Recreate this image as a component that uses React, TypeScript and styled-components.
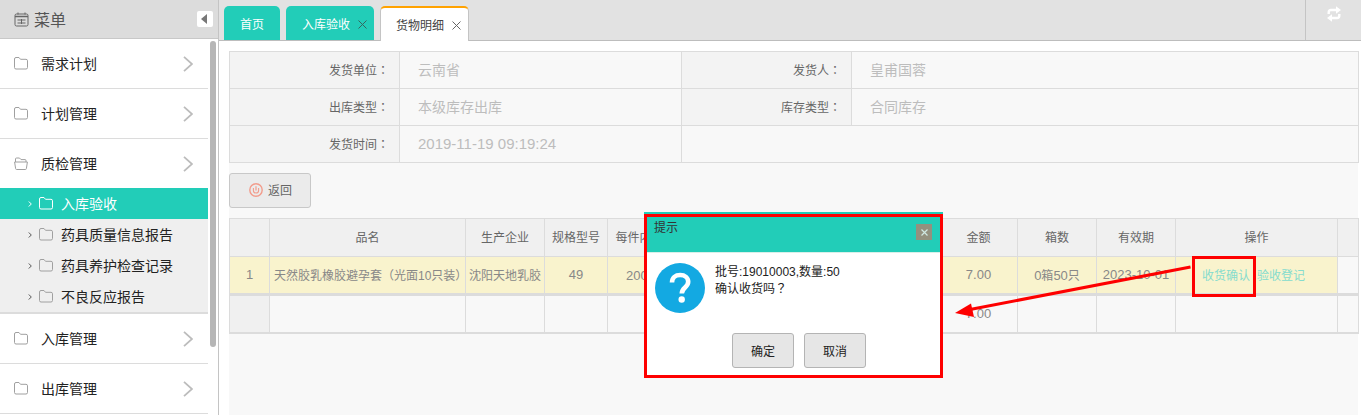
import React from "react";
import styled, { createGlobalStyle } from "styled-components";

const teal = "#22cdb8";
const line = "#dcdcdc";

const Global = createGlobalStyle`
  html, body { margin: 0; padding: 0; background: #fff; }
  body { font-family: "Liberation Sans", "Noto Sans CJK SC", sans-serif; font-size: 12px; color: #333; }
`;

const Page = styled.div`
  position: relative;
  display: flex;
  width: 1361px;
  height: 415px;
  overflow: hidden;
  background: #fff;
`;

const Sidebar = styled.aside`
  position: relative;
  flex: 0 0 219px;
  height: 415px;
  box-sizing: border-box;
  border-right: 1px solid #c4c4c4;
  overflow: hidden;
`;

const SideHeader = styled.div`
  display: flex;
  align-items: center;
  gap: 5px;
  height: 39px;
  box-sizing: border-box;
  padding-left: 14px;
  background: #dcdcdc;
  border-bottom: 1px solid #c8c8c8;
  color: #555;
  font-size: 16px;
`;

const Collapse = styled.button`
  display: flex;
  align-items: center;
  justify-content: center;
  width: 16px;
  height: 16px;
  margin-left: auto;
  margin-right: 5px;
  margin-top: -1px;
  padding: 0 2px 0 0;
  border: none;
  border-radius: 2px;
  background: #fff;
`;

const Triangle = styled.span`
  width: 0;
  height: 0;
  border-top: 5px solid transparent;
  border-bottom: 5px solid transparent;
  border-right: 6px solid #777;
`;

const Menu = styled.div`
  width: 208px;
`;

const MenuItem = styled.div<{ $flat?: boolean }>`
  display: flex;
  align-items: center;
  height: ${(p) => (p.$flat ? "49px" : "50px")};
  box-sizing: border-box;
  padding: 0 15px 0 14px;
  border-bottom: ${(p) => (p.$flat ? "none" : `1px solid ${line}`)};
  font-size: 14px;
  color: #222;
`;

const MenuLabel = styled.span`
  margin-left: 13px;
  padding-bottom: 2px;
  flex: 1;
`;

const SubMenu = styled.div`
  background: #efefef;
  border-bottom: 2px solid ${line};
`;

const SubItem = styled.div<{ $active?: boolean }>`
  display: flex;
  align-items: center;
  height: 31px;
  padding-left: 28px;
  font-size: 14px;
  color: ${(p) => (p.$active ? "#fff" : "#222")};
  background: ${(p) => (p.$active ? teal : "transparent")};
`;

const SubLabel = styled.span`
  margin-left: 8px;
  padding-bottom: 2px;
`;

const Scrollbar = styled.div`
  position: absolute;
  left: 210px;
  top: 41px;
  width: 6px;
  height: 306px;
  border-radius: 3px;
  background: #b6b6b6;
`;

const Main = styled.main`
  flex: 1;
  min-width: 0;
  display: flex;
  flex-direction: column;
`;

const TabBar = styled.div`
  display: flex;
  align-items: flex-end;
  gap: 6px;
  height: 41px;
  box-sizing: border-box;
  padding-left: 5px;
  background: #e2e2e2;
  border-bottom: 1px solid #bdbdbd;
`;

const Tab = styled.div<{ $active?: boolean; $w: number }>`
  display: flex;
  align-items: center;
  width: ${(p) => p.$w}px;
  height: ${(p) => (p.$active ? "35px" : "34px")};
  box-sizing: border-box;
  padding-left: ${(p) => (p.$active ? "15px" : "16px")};
  margin-bottom: ${(p) => (p.$active ? "-1px" : "0")};
  border-radius: 5px 5px 0 0;
  background: ${(p) => (p.$active ? "#fff" : teal)};
  color: ${(p) => (p.$active ? "#444" : "#fff")};
  border: ${(p) => (p.$active ? "1px solid #c4c4c4" : "none")};
  border-bottom: none;
  border-top: ${(p) => (p.$active ? "2px solid #ffa200" : "none")};
  font-size: 12px;
`;

const TabClose = styled.svg`
  margin-left: 8px;
  margin-top: 2px;
  flex: none;
`;

const Refresh = styled.div`
  margin-left: auto;
  align-self: stretch;
  display: flex;
  align-items: flex-start;
  justify-content: center;
  width: 56px;
  padding-top: 6px;
  box-sizing: border-box;
  border-left: 1px solid #c4c4c4;
`;

const Content = styled.div`
  flex: 1;
  margin: 10px 3px 0 10px;
  background: #f8f8f8;
`;

const Table = styled.table`
  width: 1129px;
  table-layout: fixed;
  border-collapse: collapse;
  font-size: 12px;
`;

const InfoLabel = styled.td`
  height: 34px;
  padding: 0 10px 2px 0;
  border: 1px solid ${line};
  background: #f3f3f3;
  color: #666;
  text-align: right;
`;

const InfoValue = styled.td`
  height: 34px;
  padding: 0 0 2px 18px;
  border: 1px solid ${line};
  color: #bdbdbd;
  font-size: 14px;
`;

const Punct = styled.span`
  font-family: "Noto Sans CJK TC", sans-serif;
`;

const DateText = styled.span`
  font-size: 15px;
`;

const Toolbar = styled.div`
  padding: 10px 0;
`;

const BackButton = styled.button`
  display: flex;
  align-items: center;
  gap: 5px;
  width: 82px;
  height: 35px;
  padding: 0 0 2px 19px;
  box-sizing: border-box;
  border: 1px solid #c8c8c8;
  border-radius: 3px;
  background: #ebebeb;
  color: #666;
  font: inherit;
  font-size: 12px;
`;

const Grid = styled(Table)`
  border-bottom: 2px solid ${line};
  border-top: 1px solid ${line};
`;

const Th = styled.th`
  height: 35px;
  padding: 0 0 2px;
  border: 1px solid ${line};
  background: #f0f0f0;
  color: #666;
  font-weight: 400;
  text-align: center;
  overflow: hidden;
  white-space: nowrap;
`;

const Td = styled.td<{ $tone?: "row" | "head"; $indent?: number }>`
  height: 34px;
  padding: 0 0 2px ${(p) => p.$indent ?? 0}px;
  border: 1px solid ${line};
  background: ${(p) => (p.$tone === "row" ? "#f9f3cd" : p.$tone === "head" ? "#f0f0f0" : "transparent")};
  color: #888;
  text-align: ${(p) => (p.$indent ? "left" : "center")};
  overflow: hidden;
  white-space: nowrap;
`;

const BodyRow = styled.tr`
  border-bottom: 3px solid ${line};
`;

const Num = styled.span`
  font-size: 13px;
`;

const LinkGroup = styled.div`
  display: flex;
  gap: 7px;
  padding-left: 26px;
`;

const ActionLink = styled.a`
  color: #86dccd;
`;

const Dialog = styled.div`
  position: absolute;
  left: 644px;
  top: 212px;
  width: 299px;
  height: 166px;
  background: #fff;
  color: #222;
`;

const DialogTitle = styled.div`
  display: flex;
  justify-content: space-between;
  height: 41px;
  box-sizing: border-box;
  padding: 9px 11px 0 10px;
  background: ${teal};
  border-bottom: 1px solid #d8efe9;
  line-height: 15px;
  color: #333;
`;

const DialogClose = styled.span`
  display: flex;
  align-items: center;
  justify-content: center;
  width: 16px;
  height: 16px;
  margin-top: 3px;
  background: #93917f;
`;

const DialogBody = styled.div`
  display: flex;
  gap: 10px;
  height: 80px;
  box-sizing: border-box;
  padding: 10px 0 0 11px;
`;

const DialogText = styled.div`
  line-height: 16px;
  padding-top: 1px;
`;

const DialogFooter = styled.div`
  display: flex;
  justify-content: flex-end;
  gap: 10px;
  padding-right: 77px;
`;

const DialogButton = styled.button`
  width: 62px;
  height: 35px;
  border: 1px solid #b4b4b4;
  border-radius: 3px;
  background: #e6e6e6;
  color: #222;
  font: inherit;
`;

const RedFrame = styled.div<{ $x: number; $y: number; $w: number; $h: number }>`
  position: absolute;
  left: ${(p) => p.$x}px;
  top: ${(p) => p.$y}px;
  width: ${(p) => p.$w}px;
  height: ${(p) => p.$h}px;
  box-sizing: border-box;
  border: 3px solid #fe0000;
  pointer-events: none;
`;

const ArrowLayer = styled.svg`
  position: absolute;
  left: 950px;
  top: 260px;
  pointer-events: none;
`;

const Folder = ({ open, color = "#a0a0a0", size = 14 }: { open?: boolean; color?: string; size?: number }) => (
  <svg width={size} height={size - 1} viewBox="0 0 14 13" fill="none" stroke={color} strokeWidth="1" style={{ flex: "none" }}>
    {open ? (
      <path d="M1.5 5V2q0-1 1-1h3l1.5 1.6h4q1 0 1 1V5M.6 5h12.8l-1 6.5q-.1 1-1 1H2.6q-.9 0-1-1z" />
    ) : (
      <path d="M.5 2q0-1.500 1.500-1.500h3l1.500 1.800h5.500q1.500 0 1.500 1.500v6.700q0 1.500-1.500 1.500H2q-1.500 0-1.500-1.500z" />
    )}
  </svg>
);

const BigChevron = () => (
  <svg width="10" height="16" viewBox="0 0 10 16" fill="none" stroke="#bcbcbc" strokeWidth="1.800" style={{ flex: "none" }}>
    <path d="M1 .8 9 8l-8 7.200" />
  </svg>
);

const SmallChevron = ({ color = "#555" }: { color?: string }) => (
  <svg width="4" height="6" viewBox="0 0 4 6" fill="none" stroke={color} strokeWidth="1" style={{ flex: "none", marginRight: 7 }}>
    <path d="M.8.5 3.300 3 .8 5.500" />
  </svg>
);

const CalendarIcon = () => (
  <svg width="15" height="15" viewBox="0 0 15 15" fill="none" stroke="#666" strokeWidth="1">
    <rect x="1" y="2" width="13" height="12" rx="1.500" />
    <path d="M1 4.500h13" strokeWidth="1.500" />
    <path d="M3.500 8h8M3.500 11h8M7.500 7v5" />
    <path d="M4 .5v2M11 .5v2" />
  </svg>
);

const CloseX = ({ color = "#666", size = 9 }: { color?: string; size?: number }) => (
  <TabClose width={size} height={size} viewBox="0 0 9 9" fill="none" stroke={color} strokeWidth="1">
    <path d="M.5.5l8 8M8.500.5l-8 8" />
  </TabClose>
);

const RefreshIcon = () => (
  <svg width="14" height="16" viewBox="0 0 14 16" fill="none" stroke="#fff" strokeWidth="2.400">
    <path d="M1.700 8V6.200q0-2.200 2.200-2.200H9.500" />
    <path d="M12.300 8v1.800q0 2.200-2.200 2.200H4.500" />
    <path d="M9 .2 14 4 9 7.800zM5 8.200 0 12l5 3.800z" fill="#fff" stroke="none" />
  </svg>
);

const PowerIcon = () => (
  <svg width="14" height="14" viewBox="0 0 14 14" fill="none" stroke="#f29c8c" strokeWidth="1.400">
    <circle cx="7" cy="7" r="6.200" />
    <path d="M7 3.200V7.500" strokeWidth="1.200" />
    <path d="M4.400 5v2.400a2.600 2.600 0 0 0 5.200 0V5" strokeWidth="1.100" />
  </svg>
);

const QuestionIcon = () => (
  <svg width="50" height="50" viewBox="0 0 50 50" style={{ flex: "none" }}>
    <circle cx="25" cy="25" r="25" fill="#13a9e2" />
    <path d="M17 19.500c0-5 3.500-7.500 8.200-7.500 4.700 0 8 2.800 8 6.800 0 5.700-6.400 5.700-6.400 11.700" fill="none" stroke="#fff" strokeWidth="4.600" />
    <circle cx="26.700" cy="36.500" r="3.200" fill="#fff" />
  </svg>
);

const topMenus = ["需求计划", "计划管理"];
const subMenus = ["入库验收", "药具质量信息报告", "药具养护检查记录", "不良反应报告"];
const bottomMenus = ["入库管理", "出库管理"];
const colWidths = [40, 196, 79, 63, 64, 80, 80, 108, 78, 79, 79, 162, 21];
const headers = ["", "品名", "生产企业", "规格型号", "每件内装", "批号", "数量", "单价", "金额", "箱数", "有效期", "操作", ""];

const Cols = ({ widths }: { widths: number[] }) => (
  <colgroup>
    {widths.map((w, i) => (
      <col key={i} width={w} />
    ))}
  </colgroup>
);

export default function App() {
  return (
    <Page>
      <Global />
      <Sidebar>
        <SideHeader>
          <CalendarIcon />
          菜单
          <Collapse aria-label="收起">
            <Triangle />
          </Collapse>
        </SideHeader>
        <Menu>
          {topMenus.map((m) => (
            <MenuItem key={m}>
              <Folder />
              <MenuLabel>{m}</MenuLabel>
              <BigChevron />
            </MenuItem>
          ))}
          <MenuItem $flat>
            <Folder open />
            <MenuLabel>质检管理</MenuLabel>
            <BigChevron />
          </MenuItem>
          <SubMenu>
            {subMenus.map((m, i) => (
              <SubItem key={m} $active={i === 0}>
                <SmallChevron color={i === 0 ? "#fff" : "#555"} />
                <Folder color={i === 0 ? "#fff" : "#a0a0a0"} />
                <SubLabel>{m}</SubLabel>
              </SubItem>
            ))}
          </SubMenu>
          {bottomMenus.map((m) => (
            <MenuItem key={m}>
              <Folder />
              <MenuLabel>{m}</MenuLabel>
              <BigChevron />
            </MenuItem>
          ))}
        </Menu>
        <Scrollbar />
      </Sidebar>
      <Main>
        <TabBar>
          <Tab $w={56}>首页</Tab>
          <Tab $w={88}>
            入库验收
            <CloseX color="#35655e" />
          </Tab>
          <Tab $w={89} $active>
            货物明细
            <CloseX color="#666" />
          </Tab>
          <Refresh>
            <RefreshIcon />
          </Refresh>
        </TabBar>
        <Content>
          <Table>
            <Cols widths={[170, 282, 170, 507]} />
            <tbody>
              <tr>
                <InfoLabel>发货单位<Punct>：</Punct></InfoLabel>
                <InfoValue>云南省</InfoValue>
                <InfoLabel>发货人<Punct>：</Punct></InfoLabel>
                <InfoValue>皇甫国蓉</InfoValue>
              </tr>
              <tr>
                <InfoLabel>出库类型<Punct>：</Punct></InfoLabel>
                <InfoValue>本级库存出库</InfoValue>
                <InfoLabel>库存类型<Punct>：</Punct></InfoLabel>
                <InfoValue>合同库存</InfoValue>
              </tr>
              <tr>
                <InfoLabel>发货时间<Punct>：</Punct></InfoLabel>
                <InfoValue>
                  <DateText>2019-11-19 09:19:24</DateText>
                </InfoValue>
                <InfoValue colSpan={2} />
              </tr>
            </tbody>
          </Table>
          <Toolbar>
            <BackButton>
              <PowerIcon />
              返回
            </BackButton>
          </Toolbar>
          <Grid>
            <Cols widths={colWidths} />
            <thead>
              <tr>
                {headers.map((h, i) => (
                  <Th key={i}>{h}</Th>
                ))}
              </tr>
            </thead>
            <tbody>
              <BodyRow>
                <Td $tone="row"><Num>1</Num></Td>
                <Td $tone="row" $indent={4}>天然胶乳橡胶避孕套（光面10只装）</Td>
                <Td $tone="row">沈阳天地乳胶</Td>
                <Td $tone="row"><Num>49</Num></Td>
                <Td $tone="row" $indent={18}><Num>200</Num>只</Td>
                <Td $tone="row"><Num>19010003</Num></Td>
                <Td $tone="row"><Num>50</Num></Td>
                <Td $tone="row"><Num>0.14</Num></Td>
                <Td $tone="row"><Num>7.00</Num></Td>
                <Td $tone="row"><Num>0</Num>箱<Num>50</Num>只</Td>
                <Td $tone="row"><Num>2023-10-01</Num></Td>
                <Td $tone="row">
                  <LinkGroup>
                    <ActionLink>收货确认</ActionLink>
                    <ActionLink>验收登记</ActionLink>
                  </LinkGroup>
                </Td>
                <Td />
              </BodyRow>
              <tr>
                <Td $tone="head" />
                <Td /><Td /><Td /><Td /><Td /><Td /><Td />
                <Td><Num>7.00</Num></Td>
                <Td /><Td /><Td /><Td />
              </tr>
            </tbody>
          </Grid>
        </Content>
      </Main>
      <ArrowLayer width="245" height="60" viewBox="950 260 245 60">
        <path d="M1190.500 267 970 309.500" stroke="#fe0000" strokeWidth="3" fill="none" />
        <path d="M955 313 971 303.500 974 317z" fill="#fe0000" />
      </ArrowLayer>
      <RedFrame $x={1192} $y={256} $w={64} $h={41} />
      <Dialog>
        <DialogTitle>
          提示
          <DialogClose>
            <svg width="7" height="7" viewBox="0 0 7 7" stroke="#cfe8e2" strokeWidth="1.200">
              <path d="M.5.5l6 6M6.500.5l-6 6" />
            </svg>
          </DialogClose>
        </DialogTitle>
        <DialogBody>
          <QuestionIcon />
          <DialogText>
            批号:19010003,数量:50
            <br />
            确认收货吗<Punct>？</Punct>
          </DialogText>
        </DialogBody>
        <DialogFooter>
          <DialogButton>确定</DialogButton>
          <DialogButton>取消</DialogButton>
        </DialogFooter>
      </Dialog>
      <RedFrame $x={644} $y={214} $w={299} $h={164} />
    </Page>
  );
}
